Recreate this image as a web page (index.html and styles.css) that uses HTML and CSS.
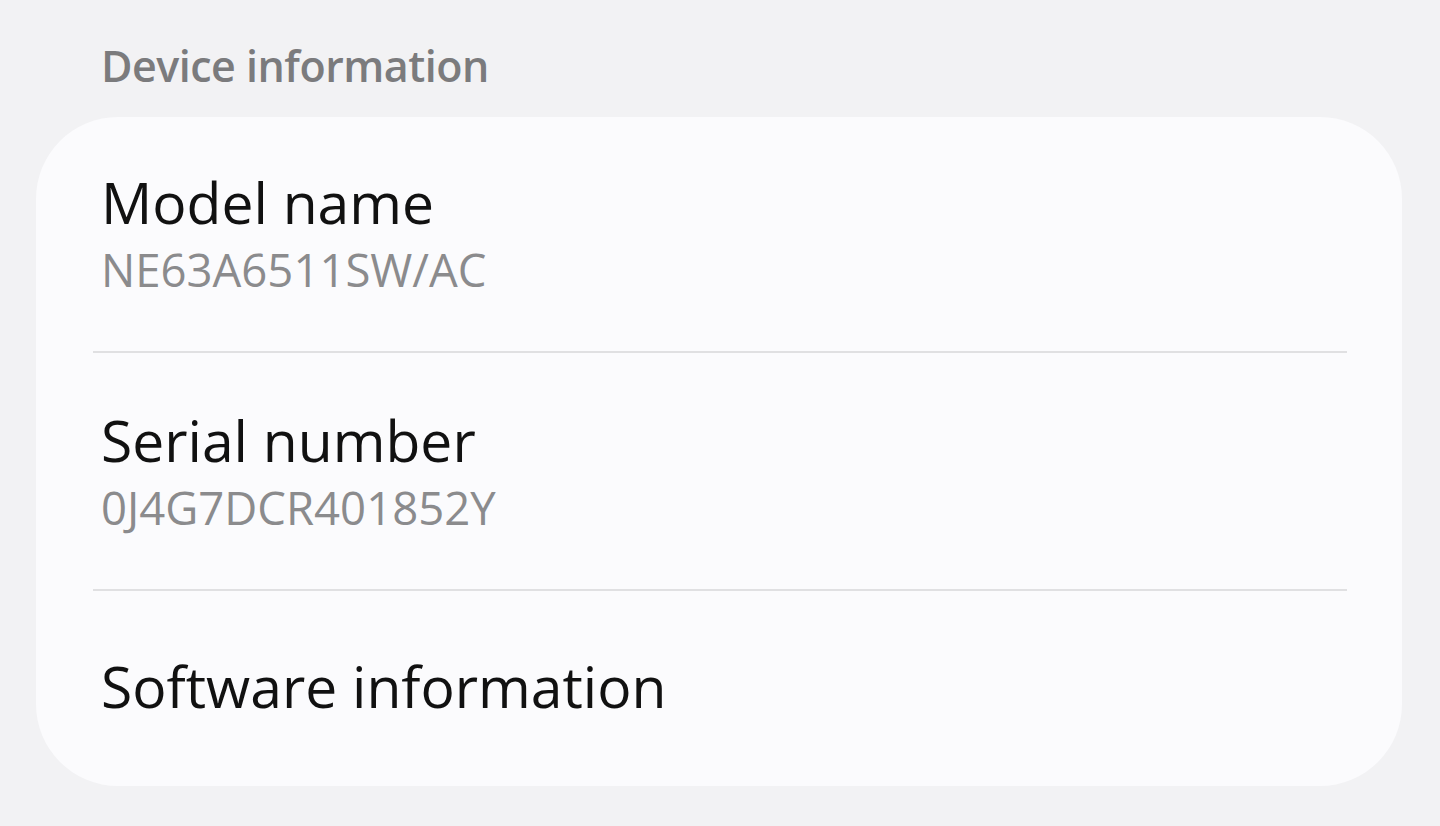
FILE: index.html
```html
<!DOCTYPE html>
<html lang="en">
<head>
<meta charset="utf-8">
<title>Device information</title>
<link rel="stylesheet" href="styles.css">
</head>
<body>
<main class="screen">
  <h2 class="section-title">Device information</h2>
  <section class="card">
    <div class="row row-first">
      <div class="row-title">Model name</div>
      <div class="row-sub">NE63A6511SW/AC</div>
    </div>
    <hr class="divider">
    <div class="row row-second">
      <div class="row-title">Serial number</div>
      <div class="row-sub">0J4G7DCR401852Y</div>
    </div>
    <hr class="divider">
    <div class="row row-last">
      <div class="row-title">Software information</div>
    </div>
  </section>
</main>
</body>
</html>
```

FILE: styles.css
```css
html, body {
  margin: 0;
  padding: 0;
  background: #f2f2f4;
}

body {
  font-family: "Open Sans", "Noto Sans", sans-serif;
  width: 1440px;
  height: 826px;
  overflow: hidden;
}

.screen {
  padding: 0 38px 0 36px;
}

.section-title {
  margin: 0;
  padding: 38px 0 0 65px;
  height: 117px;
  box-sizing: border-box;
  font-size: 43px;
  line-height: 56px;
  font-weight: 600;
  color: #7b7b7d;
  letter-spacing: -0.5px;
}

.card {
  background: #fbfbfd;
  border-radius: 82px;
  height: 669px;
  box-sizing: border-box;
  overflow: hidden;
}

.row {
  padding-left: 65px;
  box-sizing: border-box;
}

.row-first {
  padding-top: 53px;
  height: 234px;
}

.row-second {
  padding-top: 55px;
  height: 236px;
}

.row-last {
  padding-top: 63px;
}

.row-title {
  font-size: 57px;
  line-height: 64px;
  color: #111;
}

.row-sub {
  margin-top: 10px;
  font-size: 45.5px;
  line-height: 50px;
  color: #8b8b8d;
}

.divider {
  margin: 0 55px 0 57px;
  border: 0;
  height: 2px;
  background: #e0e0e2;
}
```
